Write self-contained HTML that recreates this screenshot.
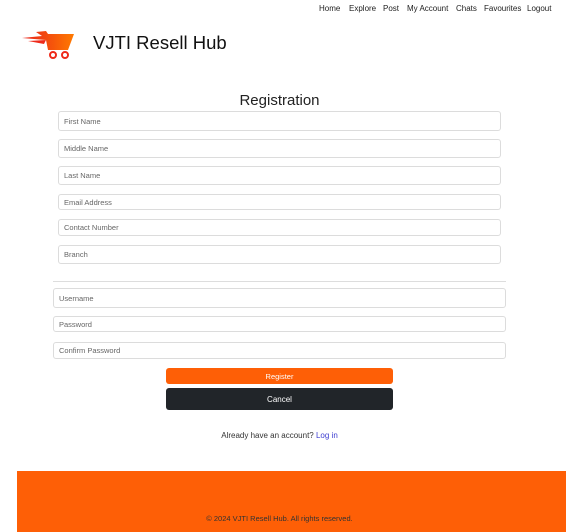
<!DOCTYPE html><html><head><style>
body{margin:0;width:572px;height:532px;background:#fff;font-family:"Liberation Sans",sans-serif;position:relative;overflow:hidden;color:#212529}
.a{position:absolute}
.nav{top:4px;font-size:8px;color:#222}
.in{position:absolute;box-sizing:border-box;border:1px solid #dcdcdc;border-radius:3px;font-size:7.5px;color:#666;padding-left:5px;display:flex;align-items:center}
.b{display:flex;align-items:center;justify-content:center}
</style></head><body>
<div class="a nav" style="left:319px">Home</div>
<div class="a nav" style="left:349px">Explore</div>
<div class="a nav" style="left:383px">Post</div>
<div class="a nav" style="left:407px">My Account</div>
<div class="a nav" style="left:456px">Chats</div>
<div class="a nav" style="left:484px">Favourites</div>
<div class="a nav" style="left:527px">Logout</div>
<svg class="a" style="left:20px;top:26px" width="62" height="34" viewBox="0 0 62 34">
<defs><linearGradient id="g" x1="0" x2="1"><stop offset="0" stop-color="#e8201a"/><stop offset="1" stop-color="#ff7a00"/></linearGradient></defs>
<path d="M2 12 L22 10 L16 6 L26 5 L28 8 L54 8 L48 24 L28 24 L26 14 Z" fill="url(#g)"/>
<path d="M8 15 L26 14 L24 18 Z" fill="#ee2a1a"/>
<circle cx="33" cy="29" r="3" fill="none" stroke="#ee2a1a" stroke-width="2"/>
<circle cx="45" cy="29" r="3" fill="none" stroke="#ee2a1a" stroke-width="2"/>
</svg>
<div class="a" style="left:93px;top:32px;font-size:18.5px;color:#111">VJTI Resell Hub</div>
<div class="a" style="left:0;width:559px;top:92px;text-align:center;font-size:15px;color:#222">Registration</div>
<div class="in" style="left:58px;width:443px;top:111px;height:20px">First Name</div>
<div class="in" style="left:58px;width:443px;top:139px;height:19px">Middle Name</div>
<div class="in" style="left:58px;width:443px;top:166px;height:19px">Last Name</div>
<div class="in" style="left:58px;width:443px;top:194px;height:16px">Email Address</div>
<div class="in" style="left:58px;width:443px;top:219px;height:17px">Contact Number</div>
<div class="in" style="left:58px;width:443px;top:245px;height:19px">Branch</div>
<div class="a" style="left:53px;width:453px;top:281px;border-top:1px solid #ddd"></div>
<div class="in" style="left:53px;width:453px;top:288px;height:20px">Username</div>
<div class="in" style="left:53px;width:453px;top:316px;height:16px">Password</div>
<div class="in" style="left:53px;width:453px;top:342px;height:17px">Confirm Password</div>
<div class="a b" style="left:166px;width:227px;top:368px;height:16px;background:#fe5f06;border-radius:3px;color:#fff;font-size:7.5px">Register</div>
<div class="a b" style="left:166px;width:227px;top:388px;height:22px;background:#212529;border-radius:3px;color:#fff;font-size:8px">Cancel</div>
<div class="a" style="left:0;width:559px;top:431px;text-align:center;font-size:8px;color:#333">Already have an account? <span style="color:#3d3dd0">Log in</span></div>
<div class="a" style="left:17px;width:549px;top:471px;height:61px;background:#fe5f06"></div>
<div class="a" style="left:0;width:559px;top:514px;text-align:center;font-size:7.5px;color:#333">© 2024 VJTI Resell Hub. All rights reserved.</div>
</body></html>
